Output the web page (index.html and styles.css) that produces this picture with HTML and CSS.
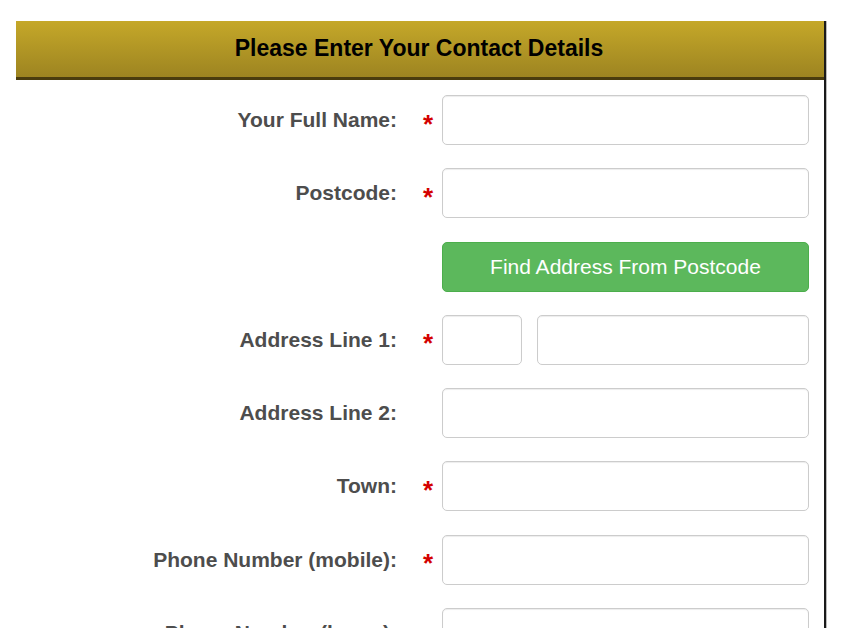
FILE: index.html
```html
<!DOCTYPE html>
<html>
<head>
<meta charset="utf-8">
<link rel="stylesheet" href="styles.css">
</head>
<body>
<div class="panel">
  <div class="header">Please Enter Your Contact Details</div>
  <form class="form">
    <div class="row">
      <label class="label">Your Full Name:</label>
      <span class="req">*</span>
      <div class="field"><input class="input" type="text"></div>
    </div>
    <div class="row">
      <label class="label">Postcode:</label>
      <span class="req">*</span>
      <div class="field"><input class="input" type="text"></div>
    </div>
    <div class="row">
      <span class="label"></span>
      <span class="req"></span>
      <div class="field"><button type="button" class="btn">Find Address From Postcode</button></div>
    </div>
    <div class="row">
      <label class="label">Address Line 1:</label>
      <span class="req">*</span>
      <div class="field split"><input class="input small" type="text"><input class="input" type="text"></div>
    </div>
    <div class="row">
      <label class="label">Address Line 2:</label>
      <span class="req"></span>
      <div class="field"><input class="input" type="text"></div>
    </div>
    <div class="row">
      <label class="label">Town:</label>
      <span class="req">*</span>
      <div class="field"><input class="input" type="text"></div>
    </div>
    <div class="row">
      <label class="label">Phone Number (mobile):</label>
      <span class="req">*</span>
      <div class="field"><input class="input" type="text"></div>
    </div>
    <div class="row">
      <label class="label">Phone Number (home):</label>
      <span class="req"></span>
      <div class="field"><input class="input" type="text"></div>
    </div>
  </form>
</div>
</body>
</html>
```
FILE: styles.css
```css
html, body {
  margin: 0;
  padding: 0;
  background: #fff;
  font-family: "Liberation Sans", Arial, sans-serif;
  overflow: hidden;
  height: 628px;
}
.panel {
  margin: 21px 0 0 16px;
  width: 808px;
  height: 607px;
  overflow: hidden;
  border-right: 2px solid #1a1a1a;
  box-shadow: 1px 0 0 #bbb;
}
.header {
  height: 56px;
  line-height: 54px;
  text-align: center;
  font-weight: bold;
  font-size: 23px;
  color: #000;
  background: linear-gradient(#c5a829, #9d8421);
  border-bottom: 3px solid #4a3c0e;
  padding-right: 2px;
}
.form {
  padding-top: 15px;
  display: flex;
  flex-direction: column;
  gap: 23.3px;
}
.row {
  display: grid;
  grid-template-columns: 381px 45px 367px;
  align-items: center;
  height: 50px;
  flex: 0 0 50px;
}
.label {
  text-align: right;
  font-weight: bold;
  font-size: 21px;
  color: #4d4d4d;
}
.req {
  color: #d40000;
  font-size: 26px;
  font-weight: bold;
  text-align: right;
  padding-right: 9px;
  padding-top: 8px;
}
.field {
  display: flex;
  height: 50px;
}
.split {
  gap: 15px;
}
.input {
  flex: 1;
  min-width: 0;
  box-sizing: border-box;
  height: 50px;
  border: 1px solid #ccc;
  border-radius: 5px;
  box-shadow: inset 0 1px 1px rgba(0,0,0,0.075);
  background: #fff;
  margin: 0;
  padding: 6px 12px;
}
.input.small {
  flex: 0 0 80px;
}
.btn {
  width: 100%;
  height: 50px;
  border: 1px solid #4cae4c;
  border-radius: 5px;
  background: #5cb85c;
  color: #fff;
  font-family: "Liberation Sans", Arial, sans-serif;
  font-size: 21px;
  margin: 0;
  padding: 0;
}
```
